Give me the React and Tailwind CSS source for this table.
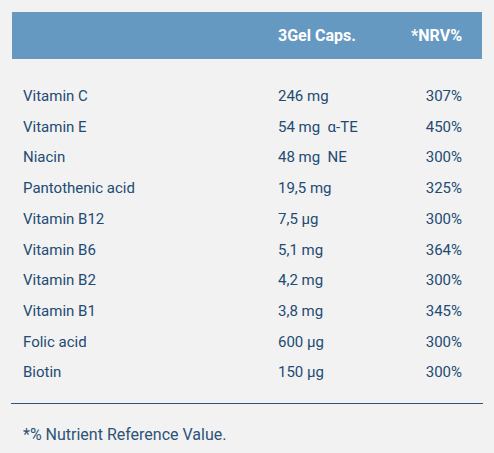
import React from "react";

const rows = [
  ["Vitamin C", "246 mg", "307%"],
  ["Vitamin E", "54 mg  α-TE", "450%"],
  ["Niacin", "48 mg  NE", "300%"],
  ["Pantothenic acid", "19,5 mg", "325%"],
  ["Vitamin B12", "7,5 µg", "300%"],
  ["Vitamin B6", "5,1 mg", "364%"],
  ["Vitamin B2", "4,2 mg", "300%"],
  ["Vitamin B1", "3,8 mg", "345%"],
  ["Folic acid", "600 µg", "300%"],
  ["Biotin", "150 µg", "300%"],
];

const App = () => {
  return (
    <div
      className="w-[494px] h-[453px] bg-[#f2f2f2] text-[#234b72] text-[15px] overflow-hidden"
      style={{ fontFamily: "Roboto, 'Liberation Sans', sans-serif" }}
    >
      {/* Header */}
      <div className="mx-[12px] mt-[12px] h-[47px] bg-[#6699c2] flex items-center font-bold text-white text-[16px]">
        <div className="w-[255px]"></div>
        <div className="flex-1 pl-[11px]">3Gel Caps.</div>
        <div className="pr-[20px]">*NRV%</div>
      </div>

      {/* Rows */}
      <div className="mx-[12px] mt-[22px]">
        {rows.map(([name, amount, nrv], index) => (
          <div key={index} className="h-[30.7px] flex items-center">
            <div className="w-[266px] pl-[11px]">{name}</div>
            <div className="flex-1 whitespace-pre">{amount}</div>
            <div className="pr-[20px]">{nrv}</div>
          </div>
        ))}
      </div>

      {/* Footer */}
      <div className="mx-[11px] mt-[15px] border-t border-[#2f5577]"></div>
      <div className="pl-[23px] mt-[19px] text-[16px] text-[#2c5378]">*% Nutrient Reference Value.</div>
    </div>
  );
};

export default App;
